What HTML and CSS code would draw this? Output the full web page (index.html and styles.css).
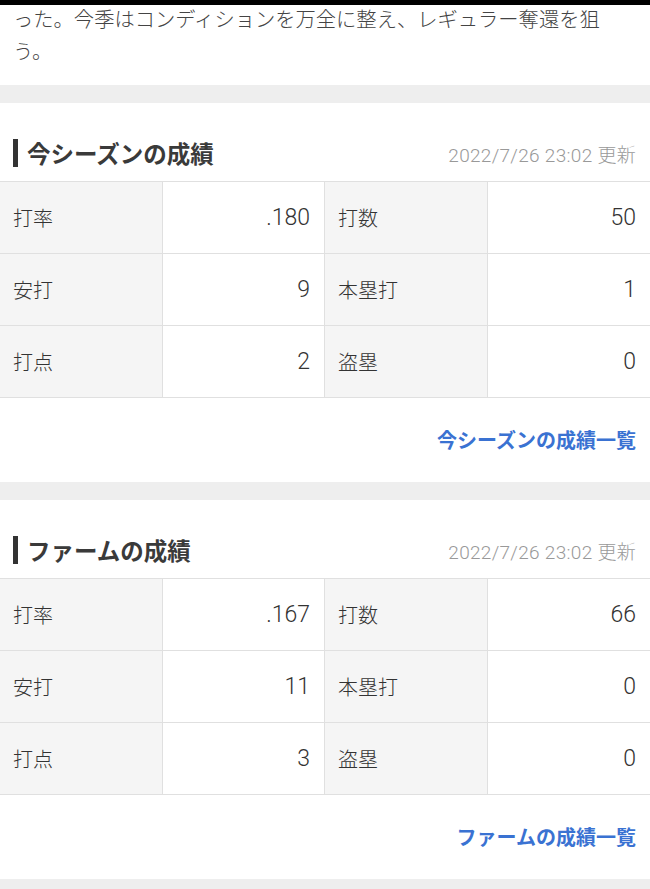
FILE: index.html
```html
<!DOCTYPE html>
<html lang="ja">
<head>
    <meta charset="UTF-8">
    <meta name="viewport" content="width=device-width, initial-scale=1.0">
    <title>選手成績</title>
    <link rel="stylesheet" href="styles.css">
</head>
<body>
    <div class="status-bar"></div>

    <p class="intro">った。今季はコンディションを万全に整え、レギュラー奪還を狙う。</p>

    <div class="gap"></div>

    <section class="stats">
        <div class="stats-head">
            <h2>今シーズンの成績</h2>
            <span class="updated">2022/7/26 23:02 更新</span>
        </div>
        <div class="stats-table">
            <div class="cell label">打率</div>
            <div class="cell value">.180</div>
            <div class="cell label">打数</div>
            <div class="cell value">50</div>
            <div class="cell label">安打</div>
            <div class="cell value">9</div>
            <div class="cell label">本塁打</div>
            <div class="cell value">1</div>
            <div class="cell label">打点</div>
            <div class="cell value">2</div>
            <div class="cell label">盗塁</div>
            <div class="cell value">0</div>
        </div>
        <div class="more">
            <a href="#">今シーズンの成績一覧</a>
        </div>
    </section>

    <div class="gap"></div>

    <section class="stats">
        <div class="stats-head">
            <h2>ファームの成績</h2>
            <span class="updated">2022/7/26 23:02 更新</span>
        </div>
        <div class="stats-table">
            <div class="cell label">打率</div>
            <div class="cell value">.167</div>
            <div class="cell label">打数</div>
            <div class="cell value">66</div>
            <div class="cell label">安打</div>
            <div class="cell value">11</div>
            <div class="cell label">本塁打</div>
            <div class="cell value">0</div>
            <div class="cell label">打点</div>
            <div class="cell value">3</div>
            <div class="cell label">盗塁</div>
            <div class="cell value">0</div>
        </div>
        <div class="more">
            <a href="#">ファームの成績一覧</a>
        </div>
    </section>

    <div class="gap"></div>
</body>
</html>
```

FILE: styles.css
```css
body {
    font-family: "Noto Sans CJK JP", "Noto Sans", sans-serif;
    margin: 0;
    padding: 0;
    background: #fff;
    color: #333;
}
.status-bar {
    position: absolute;
    top: 0;
    left: 0;
    right: 0;
    height: 5px;
    background: #000;
}
.intro {
    margin: 2px 0 0;
    padding: 0 30px 19px 13px;
    font-size: 20.3px;
    line-height: 32px;
    font-weight: 300;
    color: #444;
}
.gap {
    height: 18px;
    background: #eeeeee;
}
.stats-head {
    display: flex;
    justify-content: space-between;
    align-items: center;
    padding: 36px 14px 14px 13px;
}
.stats-head h2 {
    margin: 0;
    font-size: 23.5px;
    line-height: 28px;
    font-weight: bold;
    color: #3a3a3a;
    border-left: 5px solid #333;
    padding-left: 9px;
}
.updated {
    font-family: Roboto, "Noto Sans CJK JP", sans-serif;
    font-weight: 300;
    font-size: 19px;
    letter-spacing: 0.3px;
    color: #999;
}
.stats-table {
    display: grid;
    grid-template-columns: repeat(4, 1fr);
    border-top: 1px solid #e0e0e0;
}
.cell {
    height: 71px;
    line-height: 71px;
    font-size: 20px;
    border-bottom: 1px solid #e0e0e0;
    border-right: 1px solid #e0e0e0;
    color: #333;
}
.cell:nth-child(4n) {
    border-right: none;
}
.label {
    background: #f5f5f5;
    padding-left: 13px;
    font-weight: 300;
}
.value {
    background: #fff;
    text-align: right;
    padding-right: 14px;
    font-family: Roboto, "Noto Sans CJK JP", sans-serif;
    font-weight: 300;
    font-size: 23px;
}
.more {
    text-align: right;
    padding: 0 14px;
    height: 84px;
    line-height: 84px;
}
.more a {
    color: #3a72d2;
    font-weight: bold;
    font-size: 20px;
    text-decoration: none;
}
```
